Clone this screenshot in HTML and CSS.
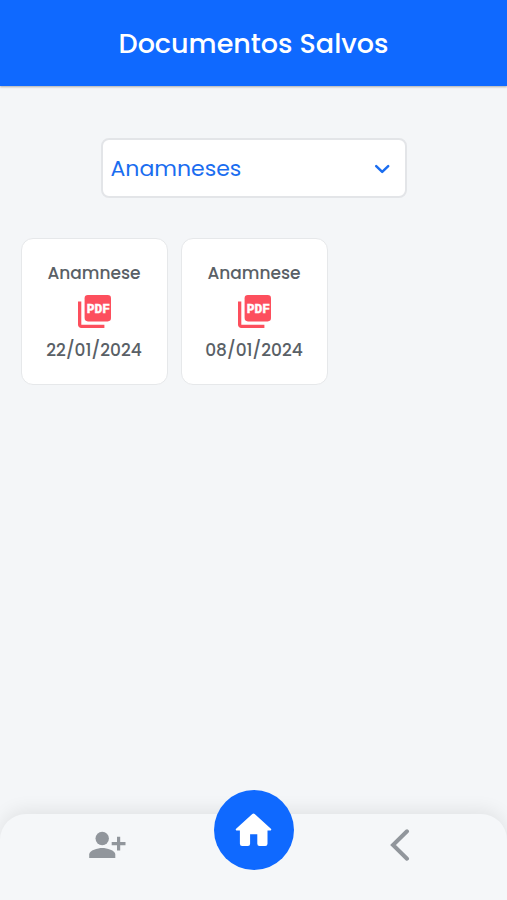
FILE: index.html
```html
<!DOCTYPE html>
<html lang="pt-BR">
<head>
  <meta charset="UTF-8" />
  <meta name="viewport" content="width=device-width, initial-scale=1.0"/>
  <title>Documentos Salvos</title>
  <link rel="stylesheet" href="styles.css">
</head>
<body>
  <header class="header">
    <h1>Documentos Salvos</h1>
  </header>

  <main class="content">
    <button class="select" type="button">
      <span>Anamneses</span>
      <svg width="16" height="10" viewBox="0 0 16 10"><path d="M2.2 2.2l6 5.7 6-5.7" fill="none" stroke="currentColor" stroke-width="2.5" stroke-linecap="round" stroke-linejoin="round"/></svg>
    </button>

    <div class="docs">
      <div class="doc">
        <span>Anamnese</span>
        <svg class="pdf" viewBox="2 2 20 20">
          <path d="M4 6H2v14c0 1.1.9 2 2 2h14v-2H4z"/>
          <rect x="6" y="2" width="16" height="16" rx="2"/>
          <text x="7.3" y="12.9">PDF</text>
        </svg>
        <span>22/01/2024</span>
      </div>
      <div class="doc">
        <span>Anamnese</span>
        <svg class="pdf" viewBox="2 2 20 20">
          <path d="M4 6H2v14c0 1.1.9 2 2 2h14v-2H4z"/>
          <rect x="6" y="2" width="16" height="16" rx="2"/>
          <text x="7.3" y="12.9">PDF</text>
        </svg>
        <span>08/01/2024</span>
      </div>
    </div>
  </main>

  <nav class="navbar">
    <a class="nav-item nav-add" aria-label="Adicionar paciente">
      <svg width="37" height="28" viewBox="0 0 37 28" fill="currentColor">
        <circle cx="13.2" cy="7.5" r="6.7"/>
        <path d="M.2 27v-3.4C.2 19.3 8.8 17 13.3 17s13 2.3 13 6.6V27z"/>
        <path d="M28 5.8h3.2V11h5.3v3.2h-5.3v5.2H28v-5.2h-5.3V11H28z"/>
      </svg>
    </a>
    <a class="home" aria-label="Início">
      <svg width="37" height="34" viewBox="0 0 37 34" fill="currentColor">
        <path d="M17.3 1a1.9 1.9 0 0 1 2.4 0l16.200 14.700c.8.800.3 1.900-.7 1.900h-2.700v13.200a2.200 2.200 0 0 1-2.200 2.200h-5.800a2.200 2.200 0 0 1-2.200-2.200v-9.500h-7.200v9.500a2.200 2.200 0 0 1-2.200 2.200H7.100a2.200 2.200 0 0 1-2.200-2.200V17.600H1.800c-1 0-1.500-1.100-.7-1.900z"/>
      </svg>
    </a>
    <a class="nav-item" aria-label="Voltar">
      <svg width="20" height="32" viewBox="0 0 20 32"><path d="M17 2.3L3 16l14 13.7" fill="none" stroke="currentColor" stroke-width="4" stroke-linecap="round"/></svg>
    </a>
  </nav>
</body>
</html>
```

FILE: styles.css
```css
body {
  margin: 0;
  height: 100vh;
  display: flex;
  flex-direction: column;
  overflow: hidden;
  background: #f4f6f8;
  font-family: Poppins, Inter, sans-serif;
}
.header {
  height: 86px;
  display: flex;
  justify-content: center;
  align-items: center;
  background: #0f69ff;
  box-shadow: 0 1px 2px rgba(0,0,0,0.3);
}
h1 {
  margin: 0;
  padding-top: 1px;
  color: #fff;
  font-size: 27px;
  font-weight: 500;
}
.content {
  flex: 1;
  display: flex;
  flex-direction: column;
  padding: 52px 20.5px 0;
}
.select {
  align-self: center;
  box-sizing: border-box;
  width: 306px;
  height: 60px;
  display: flex;
  justify-content: space-between;
  align-items: center;
  padding: 1px 15px 0 8px;
  border: 2px solid #e3e5e8;
  border-radius: 8px;
  background: #fff;
  color: #1a6df0;
  font-family: inherit;
  font-size: 22px;
}
.docs {
  display: flex;
  gap: 13px;
  margin-top: 40px;
}
.doc {
  box-sizing: border-box;
  width: 147px;
  height: 147px;
  display: flex;
  flex-direction: column;
  align-items: center;
  padding-top: 22px;
  border: 1px solid #e6e8ea;
  border-radius: 12px;
  background: #fff;
  color: #596066;
  font-size: 17px;
  font-weight: 500;
  line-height: 24px;
}
.pdf {
  width: 33px;
  height: 33px;
  margin: 10px 0;
  overflow: visible;
  fill: #fd4f5d;
}
.pdf text {
  fill: #fff;
  stroke: #fff;
  stroke-width: 0.3px;
  font-family: "Liberation Mono", monospace;
  font-size: 7.8px;
  line-height: 1;
  font-weight: bold;
}
.navbar {
  height: 86px;
  display: grid;
  grid-template-columns: 1fr 80px 1fr;
  background: #f5f7f9;
  border-radius: 26px 26px 0 0;
  box-shadow: 0 -4px 18px rgba(0,0,0,0.08);
}
.nav-item {
  display: flex;
  justify-content: center;
  height: 62px;
  align-items: center;
  color: #91969c;
}
.nav-add {
  padding-left: 1px;
}
.home {
  height: 80px;
  margin-top: -24px;
  display: flex;
  justify-content: center;
  align-items: center;
  border-radius: 50%;
  background: #0f69ff;
  color: #fff;
}
```
